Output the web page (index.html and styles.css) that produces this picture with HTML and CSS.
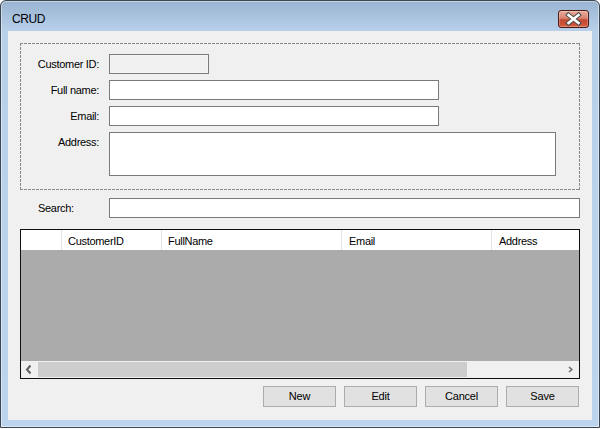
FILE: index.html
```html
<!DOCTYPE html>
<html>
<head>
<meta charset="utf-8">
<link rel="stylesheet" href="styles.css">
</head>
<body>
<div class="window">
  <div class="titlebar">
    <span class="title">CRUD</span>
    <div class="close">
      <svg width="29" height="16" viewBox="0 0 29 16">
        <path d="M9.5 4 L19.5 12 M19.5 4 L9.5 12" stroke="#4a4a4a" stroke-width="4.6" stroke-linecap="square" fill="none"/>
        <path d="M9.5 4 L19.5 12 M19.5 4 L9.5 12" stroke="#ffffff" stroke-width="2.6" stroke-linecap="square" fill="none"/>
      </svg>
    </div>
  </div>
  <div class="client">
    <div class="group">
      <div class="lbl">Customer ID:</div><div class="tb tb-id"></div>
      <div class="lbl">Full name:</div><div class="tb tb-name"></div>
      <div class="lbl">Email:</div><div class="tb tb-name"></div>
      <div class="lbl">Address:</div><div class="tb tb-addr"></div>
    </div>
    <div class="search-row">
      <div class="search-lbl">Search:</div><div class="tb tb-search"></div>
    </div>
    <div class="grid">
      <div class="gh">
        <div class="hc hc-row"></div>
        <div class="hc hc-id">CustomerID</div>
        <div class="hc hc-name">FullName</div>
        <div class="hc hc-email">Email</div>
        <div class="hc hc-addr">Address</div>
      </div>
      <div class="gbody"></div>
      <div class="hscroll">
        <div class="arrow">
          <svg width="17" height="17" viewBox="0 0 17 17"><polyline points="9.5,4.5 6,8.5 9.5,12.5" fill="none" stroke="#5f5f5f" stroke-width="2"/></svg>
        </div>
        <div class="track"><div class="thumb"></div></div>
        <div class="arrow">
          <svg width="17" height="17" viewBox="0 0 17 17"><polyline points="7,6 9.8,8.5 7,11" fill="none" stroke="#6a6a6a" stroke-width="1.6"/></svg>
        </div>
      </div>
    </div>
    <div class="buttons">
      <div class="btn">New</div>
      <div class="btn">Edit</div>
      <div class="btn">Cancel</div>
      <div class="btn">Save</div>
    </div>
  </div>
</div>
</body>
</html>
```

FILE: styles.css
```css
* { box-sizing: border-box; }
html, body { margin: 0; padding: 0; background: #ffffff; }
body {
  width: 601px;
  height: 429px;
  font-family: "Liberation Sans", Arial, sans-serif;
  font-size: 11px;
  color: #000;
}
.window {
  width: 600px;
  height: 428px;
  border: 1px solid #3d4650;
  border-radius: 6px 6px 0 0;
  background: linear-gradient(to bottom, #99b4d1 0px, #b8d0ea 30px, #bcd4ee 100%);
  box-shadow: inset 0 0 0 1px rgba(255,255,255,0.45);
  display: flex;
  flex-direction: column;
  overflow: hidden;
}
.titlebar {
  height: 30px;
  flex: none;
  display: flex;
  justify-content: space-between;
  align-items: flex-start;
  padding: 0 10px 0 11px;
}
.title {
  font-size: 12px;
  line-height: 15px;
  padding-top: 11px;
  letter-spacing: -0.4px;
  color: #000;
}
.close {
  margin-top: 9px;
  width: 31px;
  height: 18px;
  border: 1px solid #4b1a14;
  border-radius: 3px;
  background: linear-gradient(to bottom, #e9ab9d 0%, #d88471 45%, #c34a33 55%, #cc5238 85%, #d86a50 100%);
  box-shadow: inset 0 0 0 1px rgba(255,255,255,0.25);
  display: flex;
  align-items: center;
  justify-content: center;
}
.close svg { display: block; }
.client {
  flex: none;
  margin: 0 7px;
  height: 389px;
  background: #f0f0f0;
  padding: 12px 12px 0 12px;
  display: flex;
  flex-direction: column;
}
.group {
  height: 147px;
  flex: none;
  padding: 11px 0 0 1px;
  display: grid;
  grid-template-columns: 78px auto;
  grid-auto-rows: min-content;
  column-gap: 10px;
  row-gap: 6px;
  align-items: start;
  background:
    repeating-linear-gradient(90deg, #8a8a8a 0 3px, transparent 3px 4px) left top / 100% 1px no-repeat,
    repeating-linear-gradient(90deg, #8a8a8a 0 3px, transparent 3px 4px) left bottom / 100% 1px no-repeat,
    repeating-linear-gradient(180deg, #8a8a8a 0 3px, transparent 3px 4px) left top / 1px 100% no-repeat,
    repeating-linear-gradient(180deg, #8a8a8a 0 3px, transparent 3px 4px) right top / 1px 100% no-repeat;
}
.lbl {
  text-align: right;
  line-height: 20px;
  height: 20px;
  letter-spacing: -0.3px;
  white-space: nowrap;
}
.tb {
  height: 20px;
  border: 1px solid #7a7a7a;
  background: #ffffff;
}
.tb-id { width: 100px; background: #f0f0f0; box-shadow: inset 0 0 0 1px #f4f4f4; }
.tb-name { width: 330px; }
.tb-addr { width: 447px; height: 44px; }
.tb-search { width: 471px; }
.search-row {
  margin-top: 8px;
  display: grid;
  grid-template-columns: 89px 471px;
  flex: none;
}
.search-lbl {
  padding-left: 18px;
  line-height: 20px;
  letter-spacing: -0.3px;
}
.grid {
  margin-top: 11px;
  height: 150px;
  flex: none;
  border: 1px solid #0f0f0f;
  display: flex;
  flex-direction: column;
}
.gh {
  height: 20px;
  flex: none;
  background: #ffffff;
  display: flex;
}
.hc {
  height: 20px;
  border-right: 1px solid #e3e3e3;
  line-height: 22px;
  padding-left: 6px;
  letter-spacing: -0.3px;
  white-space: nowrap;
  overflow: hidden;
}
.hc-row { width: 41px; }
.hc-id { width: 100px; }
.hc-name { width: 180px; }
.hc-email { width: 150px; padding-left: 7px; }
.hc-addr { flex: 1; border-right: none; padding-left: 7px; }
.gbody {
  height: 111px;
  flex: none;
  background: #ababab;
}
.hscroll {
  height: 17px;
  flex: none;
  display: flex;
  background: #f0f0f0;
}
.arrow { width: 17px; height: 17px; flex: none; }
.arrow svg { display: block; }
.track {
  flex: 1;
  padding: 1px 0;
}
.thumb {
  width: 429px;
  height: 15px;
  background: #cdcdcd;
}
.buttons {
  margin-top: 7px;
  padding-right: 1px;
  display: flex;
  justify-content: flex-end;
  gap: 8px;
  flex: none;
}
.btn {
  width: 73px;
  height: 21px;
  border: 1px solid #adadad;
  background: #e1e1e1;
  text-align: center;
  line-height: 19px;
  letter-spacing: -0.2px;
}
```
